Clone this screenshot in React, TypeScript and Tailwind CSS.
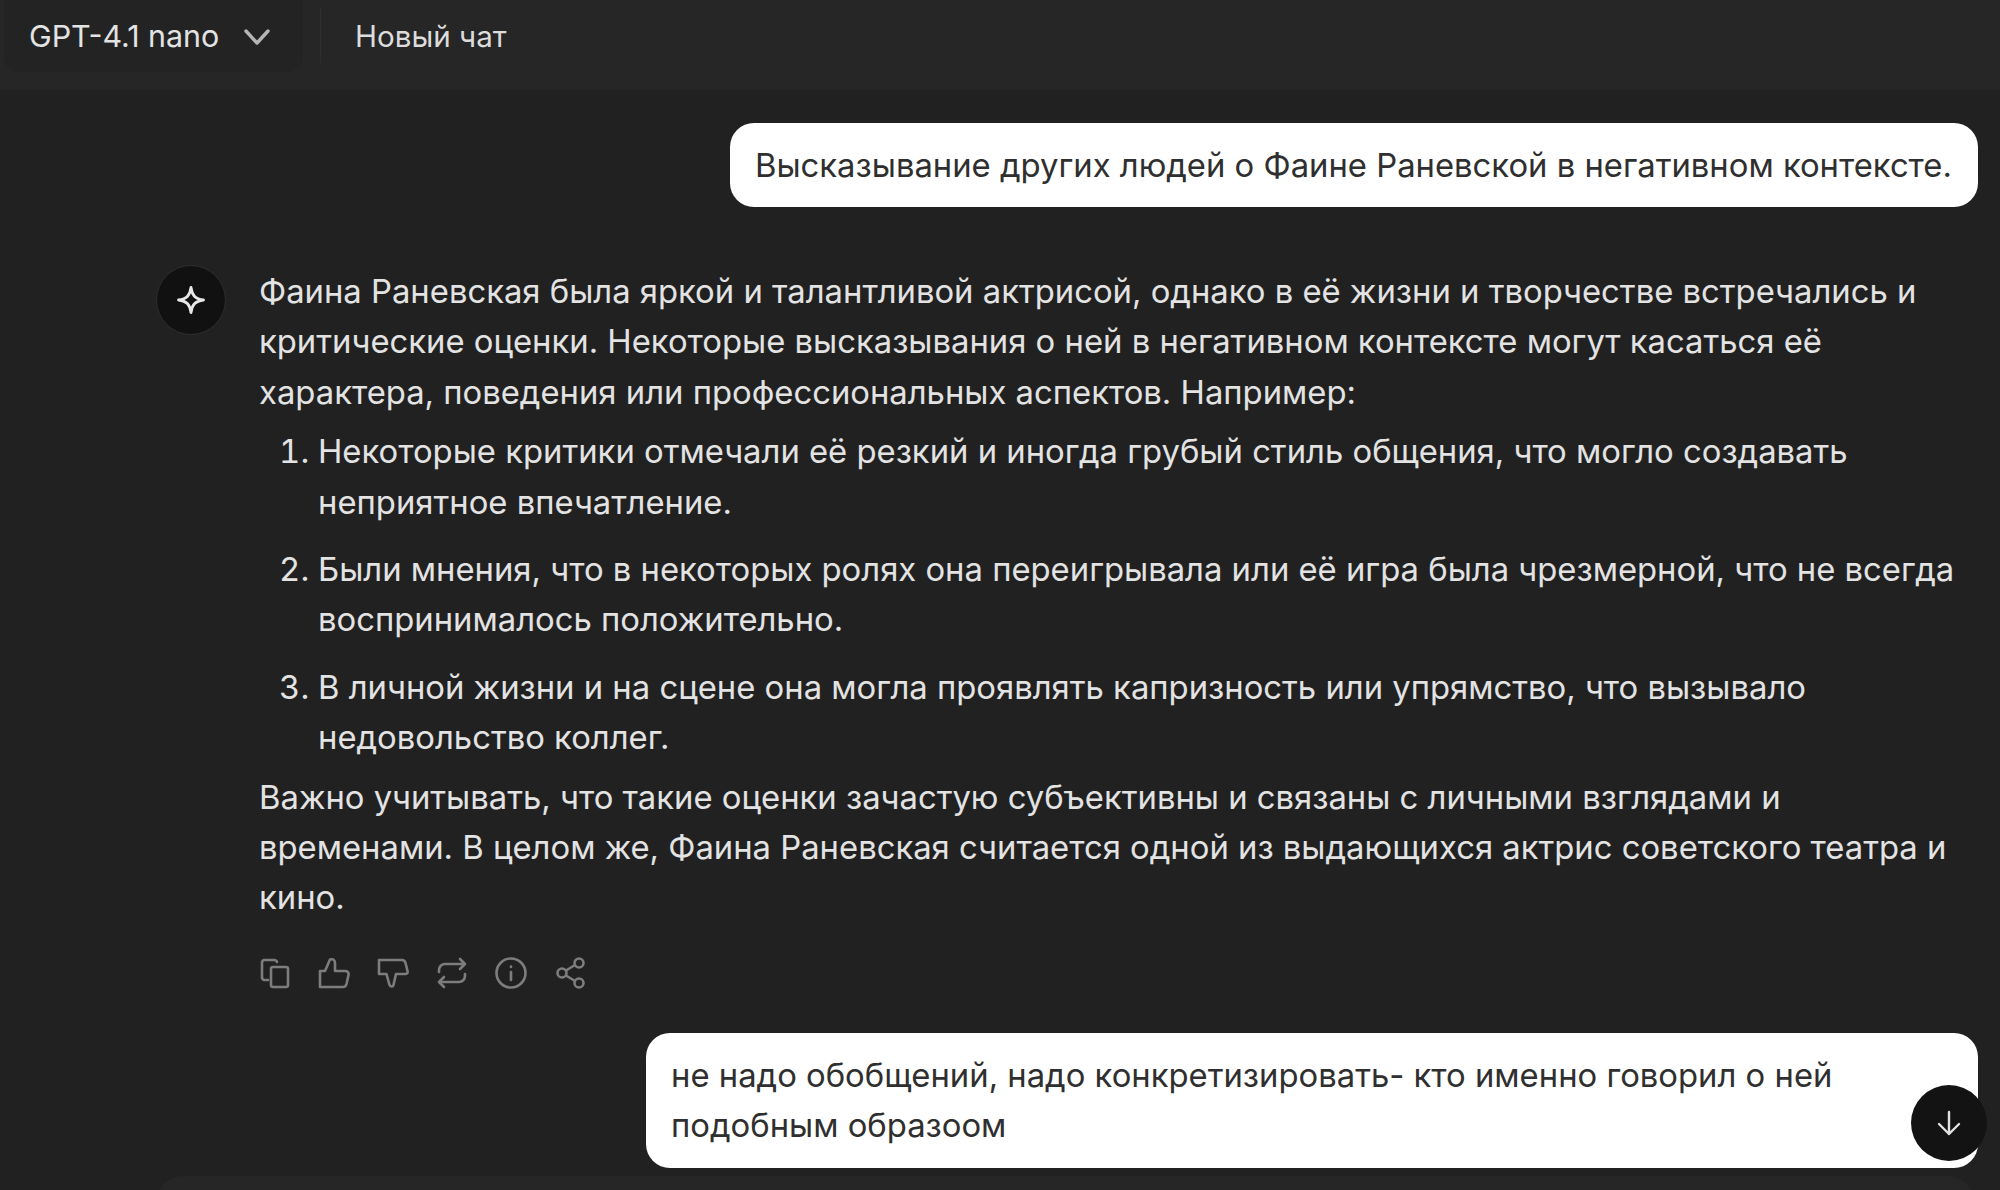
import React from "react";

const Ico = ({ children }: { children: React.ReactNode }) => (
  <svg width="32" height="32" viewBox="0 0 32 32" fill="none" stroke="#7d7d7d" strokeWidth="2.6" strokeLinecap="round" strokeLinejoin="round" className="shrink-0">
    {children}
  </svg>
);

export default function App() {
  return (
    <div className="h-[1190px] w-[2000px] overflow-hidden bg-[#212121] font-['Inter','Liberation_Sans',sans-serif] text-[32.8px] leading-[50.4px] text-[#e3e3e3] flex flex-col">
      <header className="h-[90px] shrink-0 bg-[#262626] border-b border-[#242424] flex items-start">
        <div className="ml-1 w-[299px] h-[72px] rounded-b-2xl bg-[#232323] flex items-center pl-[25px] gap-[24px] text-[30.4px]">
          <span>GPT-4.1 nano</span>
          <svg width="28" height="28" viewBox="0 0 28 28" fill="none" stroke="#b5b5b5" strokeWidth="3.4" strokeLinecap="round" strokeLinejoin="round"><path d="M3 9l11 12L25 9" /></svg>
        </div>
        <div className="ml-[17px] mt-[7px] w-px h-[56px] bg-[#2e2e2e]" />
        <div className="ml-[34px] h-[72px] flex items-center text-[29.6px] text-[#dcdcdc]">Новый чат</div>
      </header>

      <main className="flex flex-col pt-[33px] pr-[22px]">
        <div className="self-end w-[1248px] h-[84px] rounded-[24px] bg-white text-[#2f2f2f] px-[25px] flex items-center whitespace-nowrap pt-px">
          Высказывание других людей о Фаине Раневской в негативном контексте.
        </div>

        <div className="flex mt-[58px] ml-[156px]">
          <div className="w-[70px] h-[70px] rounded-full bg-[#111111] border border-[#2e2e2e] flex items-center justify-center shrink-0">
            <svg width="30" height="30" viewBox="0 0 30 30" fill="none" stroke="#e8e8e8" strokeWidth="2.8" strokeLinejoin="round"><path d="M15 2.5c1 7.500 4 11.500 12.500 12.500-8.500 1-11.500 5-12.500 12.500-1-7.500-4-11.500-12.500-12.500 8.500-1 11.500-5 12.500-12.500z" /></svg>
          </div>
          <div className="ml-[33px] w-[1710px] pt-px">
            <p>Фаина Раневская была яркой и талантливой актрисой, однако в её жизни и творчестве встречались и критические оценки. Некоторые высказывания о ней в негативном контексте могут касаться её характера, поведения или профессиональных аспектов. Например:</p>
            <ol className="list-decimal pl-[59px] mt-[9px] mb-[9px] flex flex-col gap-[17px]">
              <li>Некоторые критики отмечали её резкий и иногда грубый стиль общения, что могло создавать неприятное впечатление.</li>
              <li>Были мнения, что в некоторых ролях она переигрывала или её игра была чрезмерной, что не всегда воспринималось положительно.</li>
              <li>В личной жизни и на сцене она могла проявлять капризность или упрямство, что вызывало недовольство коллег.</li>
            </ol>
            <p>Важно учитывать, что такие оценки зачастую субъективны и связаны с личными взглядами и временами. В целом же, Фаина Раневская считается одной из выдающихся актрис советского театра и кино.</p>
            <div className="flex gap-[27px] mt-[34px]">
              <Ico><path d="M9 23H5a3 3 0 0 1-2-2V5a3 3 0 0 1 2-2h10a3 3 0 0 1 3 2" /><rect x="12" y="10" width="17" height="20" rx="2" /></Ico>
              <Ico><path d="M2 30V14h5l5-11.500c3-1 5 .5 5 3.500v8h10c2.500 0 4 1.500 3.500 4l-2 9c-.5 2-1.500 3-3.500 3z" /></Ico>
              <Ico><path d="M2 3h23c2 0 3 1 3.500 3l2 8c.5 2-.5 3-2.500 3h-9l-2.500 11c-.5 2-3 2-4 0l-3-11H2z" /></Ico>
              <Ico><path d="M24 2l5 5-5 5" /><path d="M27 7H9a6 6 0 0 0-6 6v2" /><path d="M8 30l-5-5 5-5" /><path d="M5 25h18a6 6 0 0 0 6-6v-2" /></Ico>
              <Ico><circle cx="16" cy="16" r="14.5" /><path d="M16 15v8" /><path d="M16 9.500v.5" /></Ico>
              <Ico><circle cx="25" cy="6" r="4.500" /><circle cx="8" cy="16" r="4.500" /><circle cx="25" cy="26" r="4.500" /><path d="M12 13.500l9-5.500M12 18.500l9 5.500" /></Ico>
            </div>
          </div>
        </div>

        <div className="self-end relative w-[1332px] h-[135px] mt-[44px] rounded-[24px] bg-white text-[#2f2f2f] px-[25px] pt-[17px]">
          не надо обобщений, надо конкретизировать- кто именно говорил о ней подобным образоом
          <div className="absolute right-[-9px] bottom-[7px] w-[76px] h-[76px] rounded-full bg-[#131313] flex items-center justify-center">
            <svg width="26" height="26" viewBox="0 0 26 26" fill="none" stroke="#e0e0e0" strokeWidth="2.4" strokeLinecap="round" strokeLinejoin="round"><path d="M13 2v22M3 14l10 10 10-10" /></svg>
          </div>
        </div>
        <div className="ml-[155px] mt-[8px] h-[60px] w-[1820px] rounded-t-[28px] bg-[#262626] shrink-0" />
      </main>
    </div>
  );
}
